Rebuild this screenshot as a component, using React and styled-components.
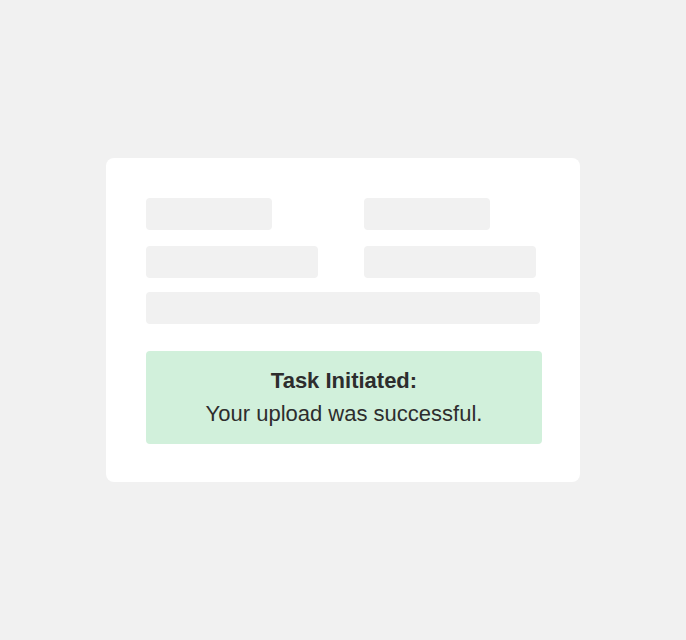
import React from "react";
import styled, { createGlobalStyle } from "styled-components";

const Global = createGlobalStyle`
  html, body { margin: 0; padding: 0; background: #f1f1f1; }
  body { font-family: "Liberation Sans", Arial, sans-serif; }
`;

const Page = styled.div`
  height: 100vh;
  display: flex;
  align-items: center;
  justify-content: center;
`;

const Card = styled.div`
  width: 474px;
  height: 324px;
  box-sizing: border-box;
  background: #ffffff;
  border-radius: 8px;
  padding: 40px 38px 38px 40px;
  display: flex;
  flex-direction: column;
`;

const Grid = styled.div`
  display: grid;
  grid-template-columns: 218px 1fr;
  row-gap: 16px;
`;

const Bar = styled.div`
  width: ${(p) => p.$w}px;
  height: 32px;
  background: #f1f1f1;
  border-radius: 4px;
  grid-column: ${(p) => (p.$full ? "1 / -1" : "auto")};
  margin-top: ${(p) => (p.$full ? "-2px" : "0")};
`;

const Alert = styled.div`
  margin-top: 27px;
  width: 396px;
  box-sizing: border-box;
  padding: 13px 0 14px;
  background: #d1f0db;
  border-radius: 4px;
  text-align: center;
  color: #2d2d2d;
  font-size: 22px;
  line-height: 33px;
`;

const Title = styled.div`
  font-weight: 700;
`;

const Message = styled.div``;

export default function App() {
  return (
    <>
      <Global />
      <Page>
        <Card>
          <Grid>
            <Bar $w={126} />
            <Bar $w={126} />
            <Bar $w={172} />
            <Bar $w={172} />
            <Bar $w={394} $full />
          </Grid>
          <Alert>
            <Title>Task Initiated:</Title>
            <Message>Your upload was successful.</Message>
          </Alert>
        </Card>
      </Page>
    </>
  );
}
